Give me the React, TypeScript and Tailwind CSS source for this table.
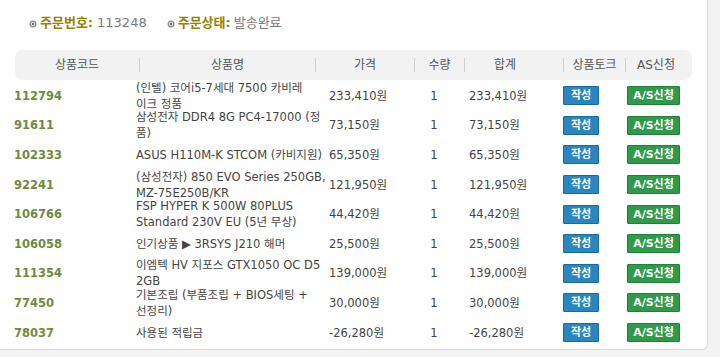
import React from "react"

interface OrderRow {
  code: string
  name: string[]
  price: string
  qty: number
  total: string
}

const rows: OrderRow[] = [
  { code: "112794", name: ["(인텔) 코어i5-7세대 7500 카비레", "이크 정품"], price: "233,410원", qty: 1, total: "233,410원" },
  { code: "91611", name: ["삼성전자 DDR4 8G PC4-17000 (정", "품)"], price: "73,150원", qty: 1, total: "73,150원" },
  { code: "102333", name: ["ASUS H110M-K STCOM (카비지원)"], price: "65,350원", qty: 1, total: "65,350원" },
  { code: "92241", name: ["(삼성전자) 850 EVO Series 250GB,", "MZ-75E250B/KR"], price: "121,950원", qty: 1, total: "121,950원" },
  { code: "106766", name: ["FSP HYPER K 500W 80PLUS", "Standard 230V EU (5년 무상)"], price: "44,420원", qty: 1, total: "44,420원" },
  { code: "106058", name: ["인기상품 ▶ 3RSYS J210 해머"], price: "25,500원", qty: 1, total: "25,500원" },
  { code: "111354", name: ["이엠텍 HV 지포스 GTX1050 OC D5", "2GB"], price: "139,000원", qty: 1, total: "139,000원" },
  { code: "77450", name: ["기본조립 (부품조립 + BIOS세팅 +", "선정리)"], price: "30,000원", qty: 1, total: "30,000원" },
  { code: "78037", name: ["사용된 적립금"], price: "-26,280원", qty: 1, total: "-26,280원" },
]

const font = "font-['DejaVu_Sans','Noto_Sans_CJK_KR',sans-serif]"

function Bullet() {
  return (
    <svg width="8" height="8" viewBox="0 0 8 8" className="mr-[3px] mt-[2px]">
      <circle cx="4" cy="4" r="3.5" fill="#8a8a8a" />
      <circle cx="4" cy="4" r="2.2" fill="#e6e6e6" />
      <circle cx="4" cy="4" r="1.2" fill="#6a6a6a" />
    </svg>
  )
}

function Divider() {
  return <span className="w-px h-[14px] bg-[#cfcfcf] shrink-0" />
}

function HeaderCell({ w, children }: { w: string; children: React.ReactNode }) {
  return <div className={`${w} shrink-0 text-center`}>{children}</div>
}

export default function App() {
  return (
    <div className={`w-[720px] h-[357px] bg-[#f3f3f3] overflow-hidden ${font}`}>
      <div className="w-[708px] h-[350px] bg-white border-r border-b border-[#dadada] rounded-br-[6px]">
        {/* order summary */}
        <div className="flex items-center pt-[15px] pl-[29px] h-[31px] text-[13px] leading-[16px]">
          <Bullet />
          <span className="font-bold text-[#938300]">주문번호:</span>
          <span className="ml-[4px] text-[#7a7a7a]">113248</span>
          <span className="w-[20px]" />
          <Bullet />
          <span className="font-bold text-[#938300]">주문상태:</span>
          <span className="ml-[3px] text-[#7a7a7a]">발송완료</span>
        </div>

        {/* table header */}
        <div className="mt-[19px] ml-[15px] w-[677px] h-[30px] rounded-[8px] bg-[#f2f2f2] flex items-center text-[12px] text-[#555]">
          <HeaderCell w="w-[124px]">상품코드</HeaderCell>
          <Divider />
          <HeaderCell w="w-[175px]">상품명</HeaderCell>
          <Divider />
          <HeaderCell w="w-[98px]">가격</HeaderCell>
          <Divider />
          <HeaderCell w="w-[49px]">수량</HeaderCell>
          <Divider />
          <HeaderCell w="w-[98px] pr-[18px]">합계</HeaderCell>
          <Divider />
          <HeaderCell w="w-[61px]">상품토크</HeaderCell>
          <Divider />
          <HeaderCell w="w-[60px]">AS신청</HeaderCell>
        </div>

        {/* table body */}
        <div className="mt-[1px] text-[11.5px] leading-[16px] text-[#444]">
          {rows.map((r) => (
            <div key={r.code} className="flex items-center h-[29.6px]">
              <div className="w-[136px] pl-[14px] shrink-0 text-[11.5px] font-bold text-[#6e8b3d]">{r.code}</div>
              <div className="w-[193px] shrink-0 whitespace-nowrap">
                {r.name.map((line, i) => (
                  <div key={i}>{line}</div>
                ))}
              </div>
              <div className="w-[85px] shrink-0 whitespace-nowrap">{r.price}</div>
              <div className="w-[40px] shrink-0 text-center">{r.qty}</div>
              <div className="w-[109px] shrink-0 pl-[15px] whitespace-nowrap">{r.total}</div>
              <div className="w-[64px] shrink-0">
                <button className="w-[36px] h-[19px] bg-[#2a86bf] border border-[#1c6a9a] text-white text-[11px] font-bold leading-[17px] rounded-[1px]">
                  작성
                </button>
              </div>
              <div className="shrink-0">
                <button className="w-[53px] h-[19px] bg-[#2f9b4a] border border-[#217f38] text-white text-[11px] font-bold leading-[17px] rounded-[1px]">
                  A/S신청
                </button>
              </div>
            </div>
          ))}
        </div>
      </div>
    </div>
  )
}
